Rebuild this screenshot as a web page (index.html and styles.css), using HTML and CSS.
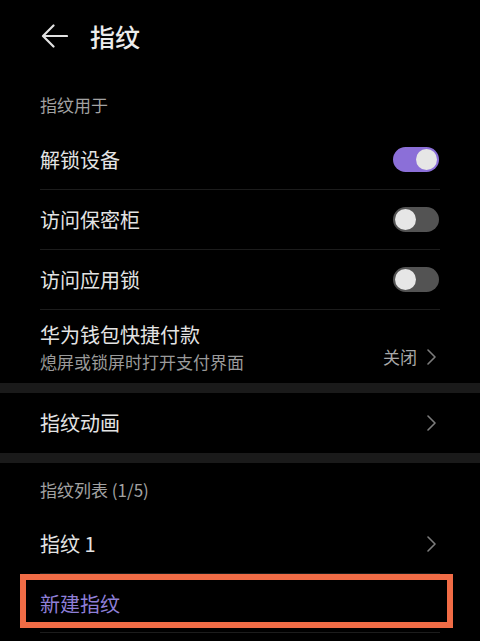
FILE: index.html
```html
<!DOCTYPE html>
<html lang="zh-CN">
<head>
<meta charset="utf-8">
<link rel="stylesheet" href="styles.css">
</head>
<body>
<div class="screen">
  <header class="header">
    <svg class="back" width="27" height="24" viewBox="0 0 27 24"><path d="M26 12H2.5M12.5 1.5L2 12L12.5 22.5" fill="none" stroke="#e2e2e2" stroke-width="2.2" stroke-linecap="round" stroke-linejoin="round"/></svg>
    <h1 class="title">指纹</h1>
  </header>

  <div class="group">
    <div class="label label-first">指纹用于</div>
    <div class="row">
      <span class="row-text">解锁设备</span>
      <span class="toggle on"><span class="knob"></span></span>
    </div>
    <div class="row">
      <span class="row-text">访问保密柜</span>
      <span class="toggle"><span class="knob"></span></span>
    </div>
    <div class="row">
      <span class="row-text">访问应用锁</span>
      <span class="toggle"><span class="knob"></span></span>
    </div>
    <div class="row row-tall">
      <div class="row-col">
        <span class="row-text">华为钱包快捷付款</span>
        <span class="row-sub">熄屏或锁屏时打开支付界面</span>
      </div>
      <span class="row-end"><span class="value">关闭</span><svg class="chev" width="9" height="16" viewBox="0 0 9 16"><path d="M1 1L8 8L1 15" fill="none" stroke="#7c7c7c" stroke-width="1.6" stroke-linecap="round" stroke-linejoin="round"/></svg></span>
    </div>
  </div>

  <div class="band"></div>

  <div class="group">
    <div class="row row-last">
      <span class="row-text">指纹动画</span>
      <svg class="chev" width="9" height="16" viewBox="0 0 9 16"><path d="M1 1L8 8L1 15" fill="none" stroke="#7c7c7c" stroke-width="1.6" stroke-linecap="round" stroke-linejoin="round"/></svg>
    </div>
  </div>

  <div class="band"></div>

  <div class="group">
    <div class="label label-list">指纹列表 (1/5)</div>
    <div class="row">
      <span class="row-text">指纹 1</span>
      <svg class="chev" width="9" height="16" viewBox="0 0 9 16"><path d="M1 1L8 8L1 15" fill="none" stroke="#7c7c7c" stroke-width="1.6" stroke-linecap="round" stroke-linejoin="round"/></svg>
    </div>
    <div class="row row-new">
      <span class="row-text accent">新建指纹</span>
      <span class="highlight"></span>
    </div>
  </div>
</div>
</body>
</html>
```

FILE: styles.css
```css
* { box-sizing: border-box; }

html, body {
  margin: 0;
  padding: 0;
  background: #000;
}

body {
  font-family: "Noto Sans CJK SC", "Noto Sans", sans-serif;
  color: #e4e4e4;
}

.screen {
  width: 480px;
  height: 641px;
  overflow: hidden;
  background: #000;
}

.header {
  height: 72px;
  display: flex;
  align-items: center;
  padding-left: 41px;
}

.back { display: block; }

.title {
  margin: 0 0 0 22px;
  font-size: 25px;
  font-weight: 500;
  line-height: 32px;
  color: #ececec;
}

.group {
  padding: 0 40px;
}

.label {
  font-size: 17px;
  line-height: 24px;
  color: #a2a2a2;
}

.label-first {
  height: 58px;
  padding-top: 21px;
}

.label-list {
  height: 51px;
  padding-top: 15px;
}

.row {
  height: 60px;
  display: flex;
  align-items: center;
  justify-content: space-between;
  border-bottom: 1px solid #1c1c1c;
}

.row-text {
  font-size: 20px;
  line-height: 28px;
  color: #e4e4e4;
}

.row-tall {
  height: 73px;
  border-bottom: none;
  align-items: flex-start;
  padding-top: 11px;
}

.row-tall .row-end {
  margin-top: 24px;
}

.row-col {
  display: flex;
  flex-direction: column;
}

.row-sub {
  font-size: 17px;
  line-height: 24px;
  margin-top: 1px;
  color: #9a9a9a;
}

.row-end {
  display: flex;
  align-items: center;
  gap: 10px;
}

.value {
  font-size: 17px;
  line-height: 24px;
  color: #a8a8a8;
}

.chev {
  display: block;
  margin-right: 4px;
}

.row-last { border-bottom: none; }

.band {
  height: 10px;
  background: #1a1a1a;
}

.toggle {
  width: 46px;
  height: 25px;
  border-radius: 13px;
  background: #535353;
  display: flex;
  align-items: center;
  padding: 0 2px;
  margin-right: 1px;
}

.toggle.on {
  background: #8b6fd8;
  justify-content: flex-end;
}

.knob {
  width: 21px;
  height: 21px;
  border-radius: 50%;
  background: #e6e6e6;
}

.row-new {
  position: relative;
  height: 59px;
  padding-top: 2px;
}

.accent {
  color: #8f7fd8;
}

.highlight {
  position: absolute;
  top: 0;
  left: -20px;
  right: -13px;
  height: 54px;
  border: 6px solid #f06c46;
}
```
